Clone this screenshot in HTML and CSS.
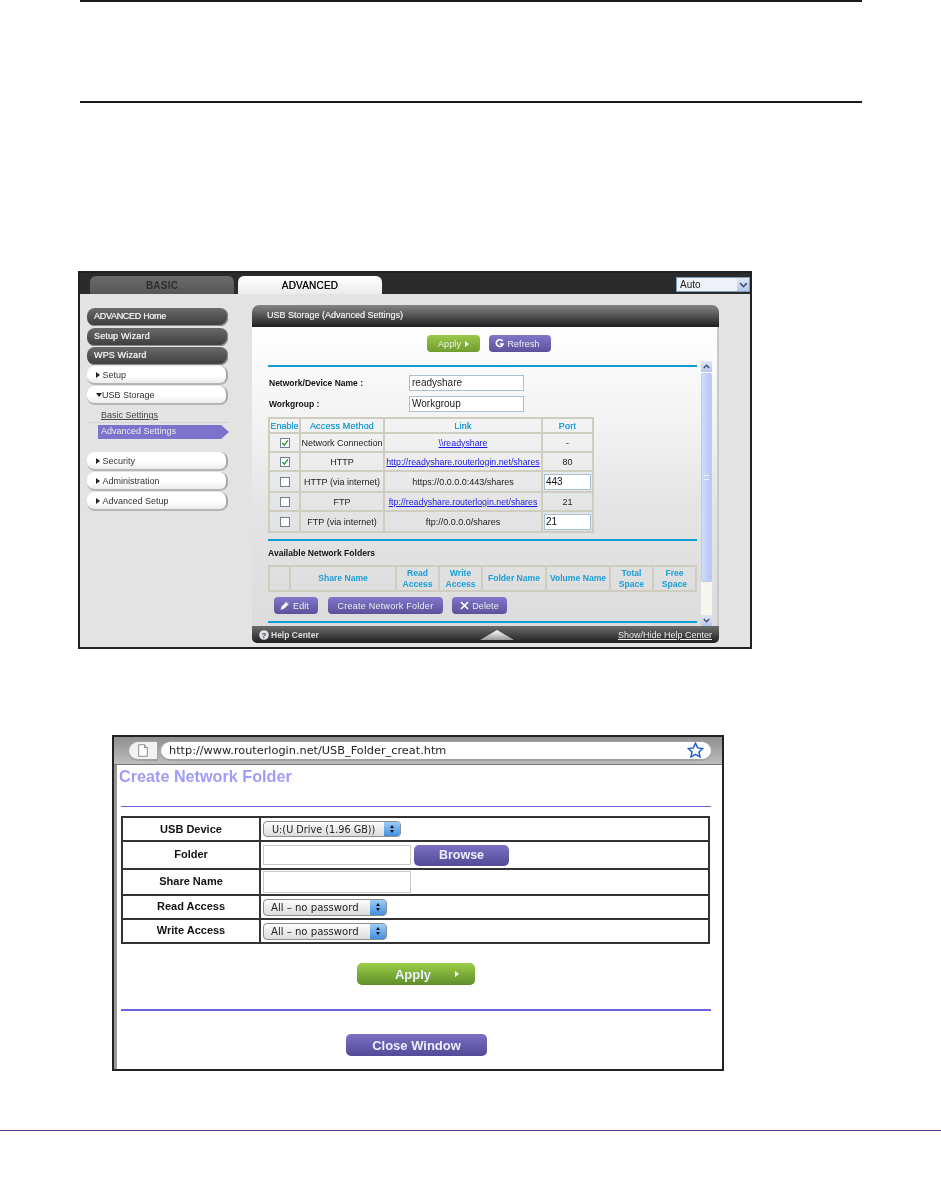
FILE: index.html
```html
<!DOCTYPE html>
<html lang="en">
<head>
<meta charset="utf-8">
<title>USB Storage</title>
<link rel="stylesheet" href="styles.css">
</head>
<body>
<main class="page">
  <div class="note"></div>

  <section class="router">
    <div class="tabbar">
      <div class="tab tab-off">BASIC</div>
      <div class="tab tab-on">ADVANCED</div>
      <div class="lang"><span class="lang-text">Auto</span><span class="lang-btn"><svg width="9" height="6" viewBox="0 0 9 6"><path d="M1 1l3.500 3.500L8 1" fill="none" stroke="#3c4f7c" stroke-width="1.600"/></svg></span></div>
    </div>
    <div class="router-body">
      <nav class="side">
        <div class="nav nav-dark nav-first">ADVANCED Home</div>
        <div class="nav nav-dark">Setup Wizard</div>
        <div class="nav nav-dark">WPS Wizard</div>
        <div class="nav nav-light"><i class="tri"></i>Setup</div>
        <div class="nav nav-light"><i class="tri-down"></i>USB Storage</div>
        <div class="sub-link"><span class="sub-text">Basic Settings</span></div>
        <div class="sub-active">Advanced Settings</div>
        <div class="nav nav-light nav-gap"><i class="tri"></i>Security</div>
        <div class="nav nav-light"><i class="tri"></i>Administration</div>
        <div class="nav nav-light"><i class="tri"></i>Advanced Setup</div>
      </nav>
      <div class="panel">
        <header class="panel-head">USB Storage (Advanced Settings)</header>
        <div class="panel-body">
          <div class="panel-content">
            <div class="actions">
              <span class="rbtn rbtn-green">Apply<i class="tri tri-white"></i></span>
              <span class="rbtn rbtn-purple rbtn-refresh"><svg width="9" height="9" viewBox="0 0 9 9"><path d="M7.600 2.200A3.400 3.400 0 1 0 8 5H4.800" fill="none" stroke="#fff" stroke-width="1.600"/></svg>Refresh</span>
            </div>
            <hr class="blue-line line-a">
            <div class="field field-a"><label class="field-label">Network/Device Name :</label><span class="text-box">readyshare</span></div>
            <div class="field field-b"><label class="field-label">Workgroup :</label><span class="text-box">Workgroup</span></div>
            <table class="access">
              <colgroup><col class="c-en"><col class="c-me"><col class="c-li"><col class="c-po"></colgroup>
              <tr class="r-head"><th class="th-enable">Enable</th><th>Access Method</th><th>Link</th><th>Port</th></tr>
              <tr class="r-a"><td><span class="check"><svg width="9" height="8" viewBox="0 0 9 8"><path d="M1.500 4l2.200 2.400L7.800 1" fill="none" stroke="#1f9a2c" stroke-width="1.500"/></svg></span></td><td>Network Connection</td><td><a class="link">\\readyshare</a></td><td>-</td></tr>
              <tr class="r-b"><td><span class="check"><svg width="9" height="8" viewBox="0 0 9 8"><path d="M1.500 4l2.200 2.400L7.800 1" fill="none" stroke="#1f9a2c" stroke-width="1.500"/></svg></span></td><td>HTTP</td><td><a class="link">http://readyshare.routerlogin.net/shares</a></td><td>80</td></tr>
              <tr class="r-c"><td><span class="check"></span></td><td>HTTP (via internet)</td><td>https://0.0.0.0:443/shares</td><td><span class="port-box">443</span></td></tr>
              <tr class="r-d"><td><span class="check"></span></td><td>FTP</td><td><a class="link">ftp://readyshare.routerlogin.net/shares</a></td><td>21</td></tr>
              <tr class="r-e"><td><span class="check"></span></td><td>FTP (via internet)</td><td>ftp://0.0.0.0/shares</td><td><span class="port-box">21</span></td></tr>
            </table>
            <hr class="blue-line line-b">
            <h3 class="folders-title">Available Network Folders</h3>
            <table class="folders">
              <colgroup><col class="f1"><col class="f2"><col class="f3"><col class="f4"><col class="f5"><col class="f6"><col class="f7"><col class="f8"></colgroup>
              <tr><th></th><th>Share Name</th><th>Read<br>Access</th><th>Write<br>Access</th><th>Folder Name</th><th>Volume Name</th><th>Total<br>Space</th><th>Free<br>Space</th></tr>
            </table>
            <div class="folder-actions">
              <span class="rbtn rbtn-purple rbtn-edit"><svg width="10" height="9" viewBox="0 0 10 9"><path d="M1 8.500l1-3 4-4 2 2-4 4zM7 .5l2 2" fill="#fff" stroke="#fff" stroke-width=".6"/></svg>Edit</span>
              <span class="rbtn rbtn-purple rbtn-create">Create Network Folder</span>
              <span class="rbtn rbtn-purple rbtn-delete"><svg width="9" height="9" viewBox="0 0 9 9"><path d="M1 1l7 7M8 1L1 8" stroke="#fff" stroke-width="1.700"/></svg>Delete</span>
            </div>
            <hr class="blue-line line-c">
          </div>
          <div class="scroll">
            <span class="scroll-btn"><svg width="7" height="5" viewBox="0 0 7 5"><path d="M.8 4l2.700-2.700L6.200 4" fill="none" stroke="#3c4f7c" stroke-width="1.400"/></svg></span>
            <span class="scroll-thumb"><i class="grip"></i></span>
            <span class="scroll-track"></span>
            <span class="scroll-btn"><svg width="7" height="5" viewBox="0 0 7 5"><path d="M.8 1l2.700 2.700L6.200 1" fill="none" stroke="#3c4f7c" stroke-width="1.400"/></svg></span>
          </div>
        </div>
        <footer class="panel-foot">
          <span class="help"><svg class="help-icon" width="10" height="10" viewBox="0 0 10 10"><circle cx="5" cy="5" r="4.800" fill="#dfe3e8"/><text x="5" y="8" text-anchor="middle" class="help-q">?</text></svg>Help Center</span>
          <span class="foot-tri"></span>
          <a class="foot-link">Show/Hide Help Center</a>
        </footer>
      </div>
    </div>
  </section>

  <section class="browser">
    <div class="toolbar">
      <div class="url-cap"><svg width="10" height="13" viewBox="0 0 10 13"><path d="M.7.7h5.800l2.800 2.800v8.800H.7z" fill="#fff" stroke="#8e8e8e"/><path d="M6.500.7v2.800h2.800" fill="#e4e4e4" stroke="#8e8e8e"/></svg></div>
      <div class="url-bar"><span class="url-text">http://www.routerlogin.net/USB_Folder_creat.htm</span><svg class="star" width="17" height="16" viewBox="0 0 17 16"><path d="M8.500 1.300l2.200 4.600 5 .6-3.700 3.400 1 5-4.500-2.500-4.500 2.500 1-5L1.300 6.500l5-.6z" fill="#fff" stroke="#1d5fd0" stroke-width="1.500"/></svg></div>
    </div>
    <div class="form-page">
      <h1 class="form-title">Create Network Folder</h1>
      <hr class="violet-line violet-thin">
      <table class="form-table">
        <colgroup><col class="fc-a"><col class="fc-b"></colgroup>
        <tr class="fr-a"><th>USB Device</th><td><span class="mac-select mac-wide"><span class="mac-label">U:(U Drive (1.96 GB))</span><span class="mac-arrows"><i></i><i></i></span></span></td></tr>
        <tr class="fr-b"><th>Folder</th><td class="cell-row"><span class="mac-input"></span><span class="fbtn fbtn-browse">Browse</span></td></tr>
        <tr class="fr-c"><th>Share Name</th><td><span class="mac-input mac-input-tall"></span></td></tr>
        <tr class="fr-d"><th>Read Access</th><td><span class="mac-select"><span class="mac-label mac-label-all">All – no password</span><span class="mac-arrows"><i></i><i></i></span></span></td></tr>
        <tr class="fr-d"><th>Write Access</th><td><span class="mac-select"><span class="mac-label mac-label-all">All – no password</span><span class="mac-arrows"><i></i><i></i></span></span></td></tr>
      </table>
      <div class="form-apply"><span class="fbtn fbtn-apply"><span>Apply</span><i class="tri tri-white"></i></span></div>
      <hr class="violet-line violet-thick">
      <div class="form-close"><span class="fbtn fbtn-close">Close Window</span></div>
    </div>
  </section>

  <div class="page-rule"></div>
</main>
</body>
</html>
```

FILE: styles.css
```css
* { box-sizing: border-box; }
html, body { margin: 0; padding: 0; background: #fff; }
body { font-family: "Liberation Sans", Arial, sans-serif; color: #222; }
.page { width: 941px; height: 1198px; overflow: hidden; }
i { display: inline-block; }
hr { margin: 0; border: 0; }
table { border-collapse: collapse; table-layout: fixed; }
th, td { padding: 0; }

.note { width: 782px; height: 103px; margin-left: 80px; border-top: 2px solid #1a1a1a; border-bottom: 2px solid #1a1a1a; margin-top: 0; }

/* first screenshot */
.router { width: 674px; height: 378px; margin: 168px 0 0 78px; border: 2px solid #222; background: #e3e3e3; filter: blur(.45px); }
.tabbar { height: 21px; background: #2b2b2b; display: flex; align-items: flex-end; padding-left: 10px; position: relative; }
.tab { width: 144px; height: 18px; border-radius: 6px 6px 0 0; text-align: center; font-size: 10px; line-height: 20px; letter-spacing: .2px; }
.tab-off { background: linear-gradient(#6b6b6b, #565656); color: #2f2f2f; font-weight: bold; }
.tab-on { margin-left: 4px; background: linear-gradient(#fff, #ebebeb); color: #111; text-shadow: 0 0 .6px #111; }
.lang { margin-left: auto; margin-right: 0; margin-bottom: 2px; width: 74px; height: 15px; background: #eef1f6; border: 1px solid #7f9db9; display: flex; align-items: stretch; font-size: 10px; line-height: 13px; color: #222; }
.lang-text { flex: 1; padding-left: 3px; }
.lang-btn { width: 12px; background: linear-gradient(#dfe7f7, #b7c7ec); display: flex; align-items: center; justify-content: center; }
.router-body { display: flex; height: 353px; padding: 0; }

.side { width: 142px; margin-left: 7px; padding-top: 14px; display: flex; flex-direction: column; }
.nav { width: 141px; font-size: 9px; border-radius: 8px; }
.nav-dark { height: 18px; margin-bottom: 1px; padding-left: 7px; line-height: 17px; letter-spacing: .15px; color: #eee; text-shadow: 0 0 .7px #eee; background: linear-gradient(#6a6a6a, #3d3d3d); box-shadow: inset -1px -1px 0 #8f8f8f; }
.nav-first { margin-bottom: 2px; letter-spacing: -.3px; }
.nav-light { height: 19px; margin-bottom: 1px; padding-left: 9px; line-height: 18px; color: #333; background: linear-gradient(#fff 55%, #ececec); border-right: 2px solid #a8a8a8; border-bottom: 2px solid #b5b5b5; display: flex; align-items: center; gap: 2.500px; }
.nav-gap { margin-top: 13px; }
.tri { width: 0; height: 0; border-left: 4px solid #222; border-top: 3px solid transparent; border-bottom: 3px solid transparent; }
.tri-down { width: 0; height: 0; border-top: 4px solid #222; border-left: 3px solid transparent; border-right: 3px solid transparent; margin-right: -2.500px; }
.tri-white { border-left-color: #fff; }
.sub-link { height: 17px; padding: 3px 0 0 14px; font-size: 9px; line-height: 12px; color: #444; border-bottom: 1px solid #d4d4d4; }
.sub-text { text-decoration: underline; }
.sub-active { width: 131px; height: 14px; margin: 2px 0 0 11px; padding-left: 3px; font-size: 9px; line-height: 12px; color: #eee; background: #7d72cc; clip-path: polygon(0 0, 94% 0, 100% 50%, 94% 100%, 0 100%); }

.panel { width: 467px; margin: 11px 0 0 23px; height: 338px; }
.panel-head { height: 22px; padding-left: 15px; border-radius: 7px 7px 0 0; background: linear-gradient(#858585, #1f1f1f); color: #e6e6e6; font-size: 9px; line-height: 21px; text-shadow: 0 0 .7px #e6e6e6; }
.panel-body { height: 299px; display: flex; gap: 4px; padding-left: 16px; background: linear-gradient(#fff, #f0f0f0 38%, #e4e4e4 60%, #dcdcdc); border-right: 2px solid #c9c9c9; }
.panel-content { width: 429px; padding-top: 8px; }
.actions { height: 17px; display: flex; gap: 9px; padding-left: 159px; }
.rbtn { height: 17px; border-radius: 4px; color: #eee; font-size: 9px; display: flex; align-items: center; justify-content: center; gap: 3px; letter-spacing: .1px; }
.rbtn-green { width: 53px; gap: 4px; background: linear-gradient(#9bc94b, #6f9c2c); }
.rbtn-purple { background: linear-gradient(#8177cb, #5c5199); }
.rbtn-refresh { width: 62px; padding-right: 5px; }
.blue-line { height: 2px; background: #159bd3; }
.line-a { margin-top: 13px; }
.field { display: flex; align-items: center; height: 16px; font-size: 8.500px; }
.field-a { margin-top: 8px; }
.field-b { margin-top: 5px; }
.field-label { width: 141px; padding-left: 1px; font-weight: bold; color: #111; }
.text-box { width: 115px; height: 16px; padding-left: 2px; background: #fff; border: 1px solid #a8c0d6; font-size: 10px; line-height: 14px; }
.access { margin-top: 5px; width: 324px; font-size: 9px; color: #222; text-align: center; }
.access th, .access td, .folders th { border: 2px solid #cfccc0; }
.access th, .folders th { color: #1b9ed6; font-weight: bold; }
.access th { font-weight: normal; letter-spacing: .2px; text-shadow: 0 0 .5px #1b9ed6; }
.access .th-enable { letter-spacing: 0; }
.c-en { width: 31px; } .c-me { width: 84px; } .c-li { width: 158px; } .c-po { width: 51px; }
.r-head { height: 15px; } .r-a, .r-b { height: 19px; } .r-c { height: 21px; } .r-d { height: 19px; } .r-e { height: 21px; }
.check { display: inline-flex; width: 10px; height: 10px; vertical-align: middle; align-items: center; justify-content: center; background: #fff; border: 1px solid #6e7f90; }
.link { color: #1a1ae0; text-decoration: underline; font-size: 8.800px; }
.port-box { display: block; width: 47px; height: 16px; margin: 0 0 0 1px; padding-left: 1px; background: #fff; border: 1px solid #a8c0d6; font-size: 10px; line-height: 14px; text-align: left; color: #111; }
.line-b { margin-top: 6px; }
.folders-title { margin: 6px 0 0; font-size: 8.600px; line-height: 12px; font-weight: bold; color: #111; }
.folders { margin-top: 6px; width: 427px; height: 27px; font-size: 8.600px; text-align: center; line-height: 11px; }
.f1 { width: 21px; } .f2 { width: 106px; } .f3 { width: 43px; } .f4 { width: 43px; } .f5 { width: 64px; } .f6 { width: 64px; } .f7 { width: 43px; } .f8 { width: 43px; }
.folder-actions { display: flex; margin-top: 5px; padding-left: 6px; }
.rbtn-edit { width: 44px; padding-right: 3px; }
.rbtn-create { width: 115px; margin-left: 10px; letter-spacing: .25px; }
.rbtn-delete { width: 55px; margin-left: 9px; }
.line-c { margin-top: 7px; }
.scroll { width: 11px; padding-top: 34px; display: flex; flex-direction: column; height: 299px; }
.scroll-btn { width: 11px; height: 11px; flex: none; display: flex; align-items: center; justify-content: center; background: linear-gradient(#dfe7f7, #b7c7ec); }
.scroll-thumb { width: 11px; height: 209px; flex: none; margin-top: 1px; display: flex; align-items: center; justify-content: center; background: linear-gradient(90deg, #cfdcfb, #b5c8f2); border: 1px solid #bccbee; border-radius: 2px; }
.grip { width: 5px; height: 5px; border-top: 1px solid #eef3ff; border-bottom: 1px solid #eef3ff; }
.scroll-track { flex: 1; background: #f6f6ef; }
.panel-foot { height: 17px; display: flex; align-items: center; padding: 0 7px; border-radius: 0 0 5px 5px; background: linear-gradient(#6c6c6c, #1f1f1f); color: #ddd; font-size: 8.500px; font-weight: bold; position: relative; }
.help { display: flex; align-items: center; gap: 2px; }
.help-q { font: bold 8px "Liberation Sans", Arial, sans-serif; fill: #3a3a3a; }
.foot-tri { position: absolute; left: 228px; top: 4px; width: 34px; height: 10px; background: linear-gradient(#fff, #9a9a9a); clip-path: polygon(50% 0, 100% 100%, 0 100%); }
.foot-link { margin-left: auto; font-size: 9px; text-decoration: underline; color: #eee; font-weight: normal; }

/* second screenshot */
.browser { width: 612px; height: 336px; margin: 86px 0 0 112px; border: 2px solid #222; background: #fff; box-shadow: inset 3px 0 0 #999; filter: blur(.45px); }
.toolbar { height: 28px; display: flex; align-items: center; gap: 2px; padding: 0 10px 0 14px; background: linear-gradient(#8f8f8f, #bdbdbd); border-bottom: 1px solid #777; }
.url-cap { width: 30px; height: 20px; display: flex; align-items: center; justify-content: center; background: #f2f2f2; border: 1px solid #a0a0a0; border-bottom-width: 2px; border-radius: 10px 0 0 10px; }
.url-bar { flex: 1; height: 20px; display: flex; align-items: center; justify-content: space-between; padding: 0 7px 0 8px; background: #fff; border: 1px solid #a0a0a0; border-bottom-width: 2px; border-radius: 10px; font-family: "DejaVu Sans", sans-serif; font-size: 11.300px; color: #222; }
.form-page { padding: 0 11px 0 7px; }
.form-title { margin: 3px 0 0 -2px; font-size: 16.200px; line-height: 17px; font-weight: bold; color: #a19bfa; }
.violet-line { background: #6d62dd; }
.violet-thin { height: 1px; margin: 21px 0 0 0; }
.violet-thick { height: 2px; margin-top: 24px; }
.form-table { margin-top: 9px; width: 587px; font-size: 11px; color: #111; border: 2px solid #333; }
.form-table th, .form-table td { border: 2px solid #333; }
.form-table th { font-weight: bold; }
.fc-a { width: 138px; } .fc-b { width: 449px; }
.fr-a { height: 24px; } .fr-b { height: 28px; } .fr-c { height: 26px; } .fr-d { height: 24px; }
.fr-b th, .fr-c th, .fr-d th { padding-bottom: 2px; }
.cell-row { font-size: 0; }
.form-table td { padding-left: 2px; vertical-align: middle; }
.mac-select { display: inline-flex; align-items: stretch; width: 124px; height: 17px; vertical-align: middle; border: 1px solid #8d8d8d; border-radius: 4px; background: linear-gradient(#fdfdfd, #dcdcdc); font-family: "DejaVu Sans", sans-serif; overflow: hidden; }
.mac-wide { width: 138px; height: 16px; }
.mac-label { flex: 1; padding-left: 8px; line-height: 15px; white-space: nowrap; color: #222; font-size: 9.700px; }
.mac-label-all { font-size: 10.100px; padding-left: 7px; }
.mac-arrows { width: 16px; display: flex; flex-direction: column; align-items: center; justify-content: center; gap: 2px; background: linear-gradient(#9ccdf7, #3f8fe0); }
.mac-arrows i { width: 0; height: 0; border-left: 2px solid transparent; border-right: 2px solid transparent; }
.mac-arrows i:first-child { border-bottom: 3px solid #111; }
.mac-arrows i:last-child { border-top: 3px solid #111; }
.mac-input { display: inline-block; width: 148px; height: 20px; vertical-align: middle; background: #fff; border: 1px solid #c8c8c8; }
.mac-input-tall { height: 22px; }
.fbtn { display: inline-flex; align-items: center; justify-content: center; vertical-align: middle; border-radius: 5px; color: #eef; font-size: 13px; font-weight: bold; }
.fbtn-browse { width: 95px; height: 21px; margin-left: 3px; font-size: 12.500px; background: linear-gradient(#7b70c4, #544a97); }
.form-apply { display: flex; justify-content: center; margin-top: 19px; }
.fbtn-apply { width: 118px; height: 22px; gap: 24px; padding-left: 22px; background: linear-gradient(#9bcf48, #5f8d2a); }
.form-close { display: flex; justify-content: center; margin-top: 23px; padding-left: 1px; }
.fbtn-close { width: 141px; height: 22px; background: linear-gradient(#7b70c4, #544a97); }

.page-rule { height: 1px; margin-top: 59px; background: #5b2d8e; }
```
